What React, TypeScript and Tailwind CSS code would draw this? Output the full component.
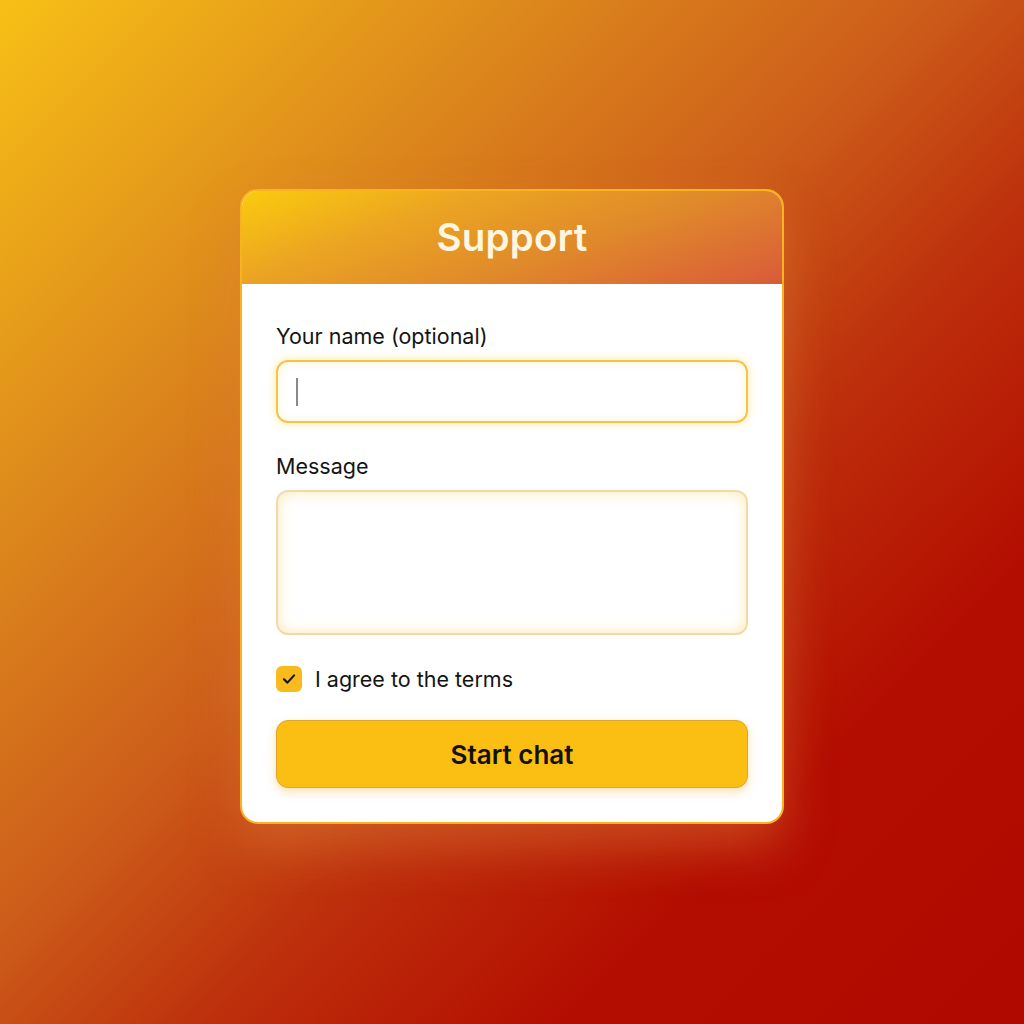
import React from "react";

export default function App() {
  return (
    <div
      className="w-[1024px] h-[1024px] flex items-start justify-center bg-[linear-gradient(135deg,#f7c016_0%,#dd8a1c_25%,#cd5e1a_45%,#bd300c_60%,#b30c00_78%,#b00a00_100%)]"
      style={{ fontFamily: "Inter, 'Noto Sans', sans-serif" }}
    >
      <div className="mt-[189px] w-[544px] rounded-[18px] border-2 border-[#f7b320] bg-white overflow-hidden shadow-[0_24px_50px_rgba(225,130,60,0.45)]">
        <div className="h-[93px] flex items-center justify-center bg-[linear-gradient(160deg,#fbcb0e_0%,#eba522_30%,#e08a2a_60%,#d95a3a_100%)]">
          <h1 className="text-[38.5px] font-semibold text-[#fff6e0] tracking-[0.2px] leading-none">Support</h1>
        </div>
        <div className="px-[34px] pt-[37px] pb-[34px] flex flex-col">
          <label className="text-[21.5px] text-[#141414] leading-[30px]">Your name (optional)</label>
          <div className="mt-[9px] h-[63px] rounded-[12px] border-2 border-[#efc54a] shadow-[0_0_10px_rgba(250,200,40,0.45),inset_0_0_8px_rgba(250,200,60,0.25)] flex items-center px-[18px]">
            <div className="w-[1.5px] h-[28px] bg-[#8a8a8a]"></div>
          </div>
          <label className="mt-[28px] text-[21.5px] text-[#141414] leading-[30px]">Message</label>
          <div className="mt-[9px] h-[145px] rounded-[12px] border-2 border-[#f0dba8] shadow-[inset_0_0_14px_rgba(250,205,90,0.45)]"></div>
          <div className="mt-[29px] flex items-center gap-[13px]">
            <div className="w-[26px] h-[26px] rounded-[6px] bg-[#f8ba1c] flex items-center justify-center">
              <svg width="18" height="18" viewBox="0 0 16 16" fill="none">
                <path d="M3.5 8.3 L6.6 11.2 L12.5 4.8" stroke="#1a1206" strokeWidth="1.9" strokeLinecap="round" strokeLinejoin="round" />
              </svg>
            </div>
            <span className="text-[21.5px] text-[#141414] leading-[30px]">I agree to the terms</span>
          </div>
          <button className="mt-[26px] h-[68px] rounded-[12px] bg-[#fbbf14] border border-[#e0a526] shadow-[0_4px_10px_rgba(240,170,40,0.35)] text-[26px] font-semibold text-[#151006]">
            Start chat
          </button>
        </div>
      </div>
    </div>
  );
}
